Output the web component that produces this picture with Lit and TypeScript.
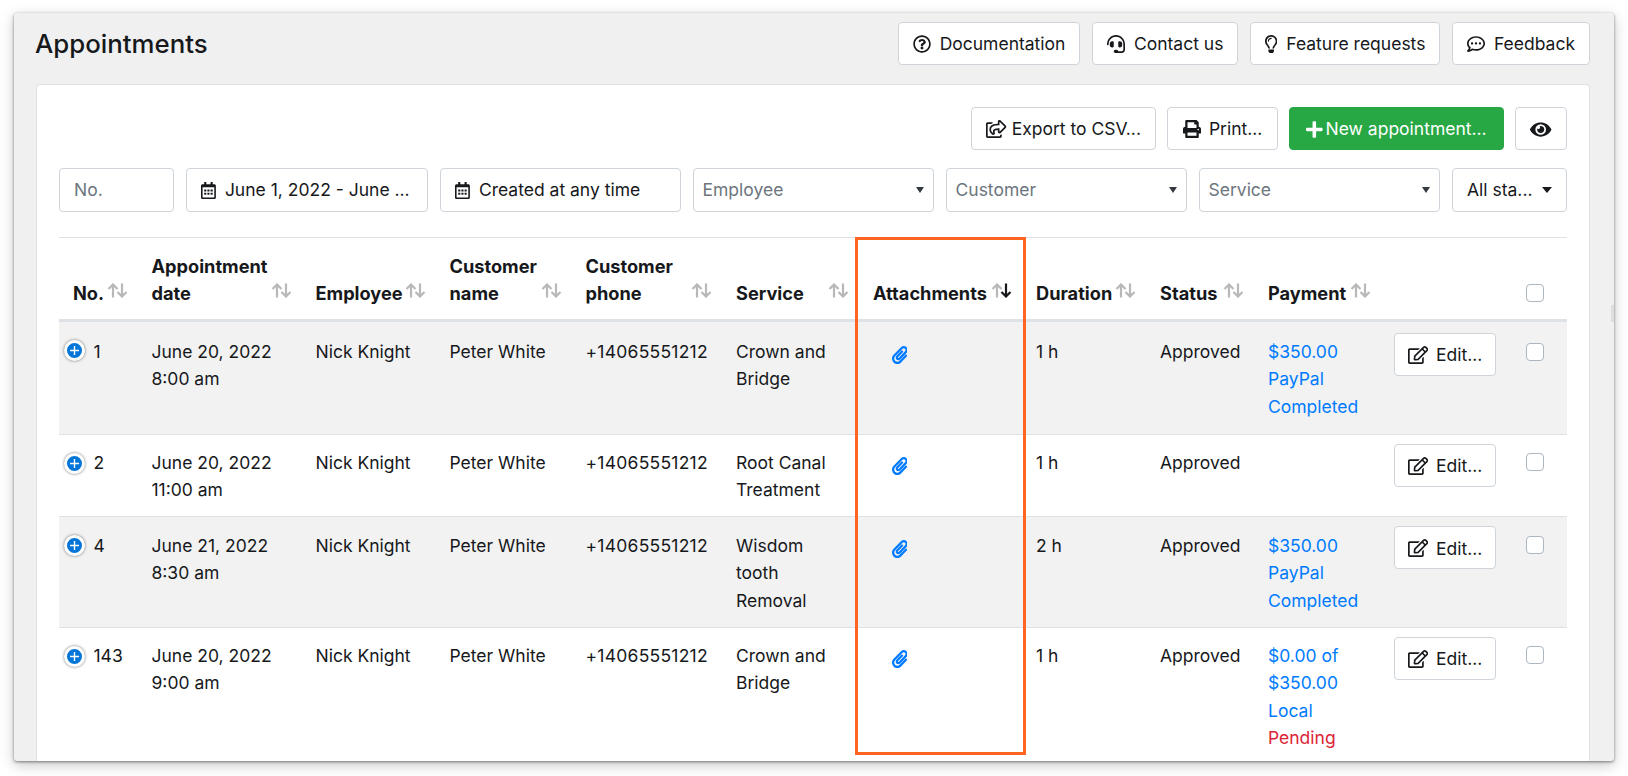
import { LitElement, html, css } from "lit";
import { customElement } from "lit/decorators.js";

// font-awesome style glyphs: [viewBox, path]
const ICONS: Record<string, [string, string]> = {
  question: ["0 0 512 512", "M256 8C119.043 8 8 119.083 8 256c0 136.997 111.043 248 248 248s248-111.003 248-248C504 119.083 392.957 8 256 8zm0 448c-110.532 0-200-89.431-200-200 0-110.495 89.472-200 200-200 110.491 0 200 89.471 200 200 0 110.53-89.431 200-200 200zm107.244-255.2c0 67.052-72.421 68.084-72.421 92.863V300c0 6.627-5.373 12-12 12h-45.647c-6.627 0-12-5.373-12-12v-8.659c0-35.745 27.1-50.034 47.579-61.516 17.561-9.845 28.324-16.541 28.324-29.579 0-17.246-21.999-28.693-39.784-28.693-23.189 0-33.894 10.977-48.942 29.969-4.057 5.12-11.46 6.071-16.666 2.124l-27.824-21.098c-5.107-3.872-6.251-11.066-2.644-16.363C184.846 131.491 214.94 112 261.794 112c49.071 0 101.45 38.304 101.45 88.8zM298 368c0 23.159-18.841 42-42 42s-42-18.841-42-42 18.841-42 42-42 42 18.841 42 42z"],
  headset: ["0 0 512 512", "M192 208c0-17.67-14.33-32-32-32h-16c-35.35 0-64 28.65-64 64v48c0 35.35 28.65 64 64 64h16c17.67 0 32-14.33 32-32V208zm176 144c35.35 0 64-28.65 64-64v-48c0-35.35-28.65-64-64-64h-16c-17.67 0-32 14.33-32 32v112c0 17.67 14.33 32 32 32h16zM256 0C113.18 0 4.58 118.83 0 256v16c0 8.84 7.16 16 16 16h16c8.84 0 16-7.16 16-16v-16c0-114.69 93.31-208 208-208s208 93.31 208 208h-.12c.08 2.43.12 165.72.12 165.72 0 23.35-18.93 42.28-42.28 42.28H320c0-26.51-21.49-48-48-48h-32c-26.51 0-48 21.49-48 48s21.49 48 48 48h181.72c49.86 0 90.28-40.42 90.28-90.28V256C507.42 118.83 398.82 0 256 0z"],
  bulb: ["0 0 352 512", "M176 80c-52.94 0-96 43.06-96 96 0 8.84 7.16 16 16 16s16-7.16 16-16c0-35.3 28.72-64 64-64 8.84 0 16-7.16 16-16s-7.16-16-16-16zM96.06 459.17c0 3.15.93 6.22 2.68 8.84l24.51 36.84c2.97 4.46 7.97 7.14 13.32 7.14h78.85c5.36 0 10.36-2.68 13.32-7.14l24.51-36.84c1.74-2.62 2.67-5.7 2.68-8.84l.05-43.18H96.02l.04 43.18zM176 0C73.72 0 0 82.97 0 176c0 44.37 16.45 84.85 43.56 115.78 16.64 18.99 42.74 58.8 52.42 92.16v.06h48v-.12c-.01-4.77-.72-9.51-2.15-14.07-5.59-17.81-22.82-64.77-62.17-109.67-20.54-23.43-31.52-53.15-31.61-84.14-.2-73.64 59.67-128 127.95-128 70.58 0 128 57.42 128 128 0 30.97-11.24 60.85-31.65 84.14-39.11 44.61-56.42 91.47-62.1 109.46a47.507 47.507 0 0 0-2.22 14.3v.1h48v-.05c9.68-33.37 35.78-73.18 52.42-92.16C335.55 260.85 352 220.37 352 176 352 78.8 273.2 0 176 0z"],
  comment: ["0 0 512 512", "M144 208c-17.7 0-32 14.3-32 32s14.3 32 32 32 32-14.3 32-32-14.3-32-32-32zm112 0c-17.7 0-32 14.3-32 32s14.3 32 32 32 32-14.3 32-32-14.3-32-32-32zm112 0c-17.7 0-32 14.3-32 32s14.3 32 32 32 32-14.3 32-32-14.3-32-32-32zM256 32C114.6 32 0 125.1 0 240c0 47.6 19.9 91.2 52.9 126.3C38 405.7 7 439.1 6.5 439.5c-6.6 7-8.4 17.2-4.6 26S14.4 480 24 480c61.5 0 110-25.7 139.1-46.3C192 442.8 223.2 448 256 448c141.4 0 256-93.1 256-208S397.4 32 256 32zm0 368c-26.7 0-53.1-4.1-78.4-12.1l-22.7-7.2-19.5 13.8c-14.3 10.1-33.9 21.4-57.5 29 7.3-12.1 14.4-25.7 19.9-40.2l10.6-28.1-20.6-21.8C69.7 314.1 48 282.2 48 240c0-88.2 93.3-160 208-160s208 71.8 208 160-93.3 160-208 160z"],
  share: ["0 0 576 512", "M561.938 158.06L417.94 14.092C387.926-15.922 336 5.097 336 48.032v57.198c-42.45 1.88-84.03 6.55-120.76 17.99-35.17 10.95-63.07 27.58-82.91 49.42C108.22 199.2 96 232.6 96 271.94c0 61.697 33.178 112.455 84.87 144.76 37.546 23.508 85.248-12.651 71.02-55.74-15.515-47.119-17.156-70.923 84.11-78.76V336c0 42.993 51.968 63.913 81.94 33.94l143.998-144c18.75-18.74 18.75-49.14 0-67.88zM384 336V232.16C255.309 234.082 166.492 255.35 206.31 376 176.79 357.55 144 324.08 144 271.94c0-109.334 129.14-118.947 240-119.85V48l144 144-144 144zm24.74 84.493a82.658 82.658 0 0 0 20.974-9.303c7.976-4.952 18.286.826 18.286 10.214V464c0 26.51-21.49 48-48 48H48c-26.51 0-48-21.49-48-48V112c0-26.51 21.49-48 48-48h132c6.627 0 12 5.373 12 12v4.486c0 4.917-2.987 9.369-7.569 11.152-13.702 5.331-26.396 11.537-38.05 18.585a12.138 12.138 0 0 1-6.28 1.777H54a6 6 0 0 0-6 6v340a6 6 0 0 0 6 6h340a6 6 0 0 0 6-6v-25.966c0-5.37 3.579-10.059 8.74-11.541z"],
  print: ["0 0 512 512", "M448 192V77.25c0-8.49-3.37-16.62-9.37-22.63L393.37 9.37c-6-6-14.14-9.37-22.63-9.37H96C78.33 0 64 14.33 64 32v160c-35.35 0-64 28.65-64 64v112c0 8.84 7.16 16 16 16h48v96c0 17.67 14.33 32 32 32h320c17.67 0 32-14.33 32-32v-96h48c8.84 0 16-7.16 16-16V256c0-35.35-28.65-64-64-64zm-64 256H128v-96h256v96zm0-224H128V64h192v48c0 8.84 7.16 16 16 16h48v96zm48 72c-13.25 0-24-10.75-24-24 0-13.26 10.75-24 24-24s24 10.74 24 24c0 13.25-10.75 24-24 24z"],
  plus: ["0 0 448 512", "M416 208H272V64c0-17.67-14.33-32-32-32h-32c-17.67 0-32 14.33-32 32v144H32c-17.67 0-32 14.33-32 32v32c0 17.67 14.33 32 32 32h144v144c0 17.67 14.33 32 32 32h32c17.67 0 32-14.33 32-32V304h144c17.67 0 32-14.33 32-32v-32c0-17.67-14.33-32-32-32z"],
  eye: ["0 0 576 512", "M572.52 241.4C518.29 135.59 410.93 64 288 64S57.68 135.64 3.48 241.41a32.35 32.35 0 0 0 0 29.19C57.71 376.41 165.07 448 288 448s230.32-71.64 284.52-177.41a32.35 32.35 0 0 0 0-29.19zM288 400a144 144 0 1 1 144-144 143.93 143.93 0 0 1-144 144zm0-240a95.31 95.31 0 0 0-25.31 3.79 47.85 47.85 0 0 1-66.9 66.9A95.78 95.78 0 1 0 288 160z"],
  calendar: ["0 0 448 512", "M148 288h-40c-6.6 0-12-5.4-12-12v-40c0-6.6 5.4-12 12-12h40c6.6 0 12 5.4 12 12v40c0 6.6-5.4 12-12 12zm108-12v-40c0-6.6-5.4-12-12-12h-40c-6.6 0-12 5.4-12 12v40c0 6.6 5.4 12 12 12h40c6.6 0 12-5.4 12-12zm96 0v-40c0-6.6-5.4-12-12-12h-40c-6.6 0-12 5.4-12 12v40c0 6.6 5.4 12 12 12h40c6.6 0 12-5.4 12-12zm-96 96v-40c0-6.6-5.4-12-12-12h-40c-6.6 0-12 5.4-12 12v40c0 6.6 5.4 12 12 12h40c6.6 0 12-5.4 12-12zm-96 0v-40c0-6.6-5.4-12-12-12h-40c-6.6 0-12 5.4-12 12v40c0 6.6 5.4 12 12 12h40c6.6 0 12-5.4 12-12zm192 0v-40c0-6.6-5.4-12-12-12h-40c-6.6 0-12 5.4-12 12v40c0 6.6 5.4 12 12 12h40c6.6 0 12-5.4 12-12zm96-260v352c0 26.5-21.5 48-48 48H48c-26.5 0-48-21.5-48-48V112c0-26.5 21.5-48 48-48h48V12c0-6.6 5.4-12 12-12h40c6.6 0 12 5.4 12 12v52h128V12c0-6.6 5.4-12 12-12h40c6.6 0 12 5.4 12 12v52h48c26.5 0 48 21.5 48 48zm-48 346V160H48v298c0 3.3 2.7 6 6 6h340c3.3 0 6-2.7 6-6z"],
  edit: ["0 0 576 512", "M402.3 344.9l32-32c5-5 13.7-1.5 13.7 5.7V464c0 26.5-21.5 48-48 48H48c-26.5 0-48-21.5-48-48V112c0-26.5 21.5-48 48-48h273.5c7.1 0 10.7 8.6 5.7 13.7l-32 32c-1.5 1.5-3.5 2.3-5.7 2.3H48v352h352V350.5c0-2.1.8-4.1 2.3-5.6zm156.6-201.8L296.3 405.7l-90.4 10c-26.2 2.9-48.5-19.2-45.6-45.6l10-90.4L432.9 17.1c22.9-22.9 59.9-22.9 82.7 0l43.2 43.2c22.9 22.9 22.9 60 .1 82.8zM460.1 174L402 115.9 216.2 301.8l-7.3 65.3 65.3-7.3L460.1 174zm64.8-79.7l-43.2-43.2c-4.1-4.1-10.8-4.1-14.8 0L436 82l58.1 58.1 30.9-30.9c4-4.2 4-10.8-.1-14.9z"],
  clip: ["0 0 448 512", "M43.246 466.142c-58.43-60.289-57.341-157.511 1.386-217.581L254.392 34c44.316-45.332 116.351-45.336 160.671 0 43.89 44.894 43.943 117.329 0 162.276L232.214 383.128c-29.855 30.537-78.633 30.111-107.982-.998-28.275-29.97-27.368-77.473 1.452-106.953l143.743-146.835c6.182-6.314 16.312-6.422 22.626-.241l22.861 22.379c6.315 6.182 6.422 16.312.241 22.626L171.427 319.927c-4.932 5.045-5.236 13.428-.648 18.292 4.372 4.634 11.245 4.711 15.688.165l182.849-186.851c19.613-20.062 19.613-52.725-.011-72.798-19.189-19.627-49.957-19.637-69.154 0L90.39 293.295c-34.763 35.56-35.299 93.12-1.191 128.313 34.01 35.093 88.985 35.137 123.058.286l172.06-175.999c6.177-6.319 16.307-6.433 22.626-.256l22.877 22.364c6.319 6.177 6.434 16.307.256 22.626l-172.06 175.998c-59.576 60.938-155.943 60.216-214.77-.485z"],
};

const icon = (name: string) => {
  const [vb, d] = ICONS[name];
  return html`<svg class="icon ${name}" viewBox=${vb} fill="currentColor"><path d=${d}></path></svg>`;
};

const sortArrows = (active = false) => html`<svg class="sort" viewBox="0 0 21 15" fill="none" stroke-width="2.2">
  <path d="M6 14.5V1.5M1.5 6L6 1.5 10.5 6" stroke="#b8b8b8"></path>
  <path d="M15 .5v13M10.5 9l4.5 4.5L19.5 9" stroke=${active ? "#16181b" : "#b8b8b8"}></path>
</svg>`;

const COLUMNS = [
  { label: "No." },
  { label: "Appointment date" },
  { label: "Employee" },
  { label: "Customer name" },
  { label: "Customer phone" },
  { label: "Service" },
  { label: "Attachments", active: true },
  { label: "Duration" },
  { label: "Status" },
  { label: "Payment" },
];

const ROWS = [
  { no: "1", date: "June 20, 2022", time: "8:00 am", service: ["Crown and", "Bridge"], dur: "1 h", pay: ["$350.00", "PayPal", "Completed"], pending: false },
  { no: "2", date: "June 20, 2022", time: "11:00 am", service: ["Root Canal", "Treatment"], dur: "1 h", pay: [], pending: false },
  { no: "4", date: "June 21, 2022", time: "8:30 am", service: ["Wisdom", "tooth", "Removal"], dur: "2 h", pay: ["$350.00", "PayPal", "Completed"], pending: false },
  { no: "143", date: "June 20, 2022", time: "9:00 am", service: ["Crown and", "Bridge"], dur: "1 h", pay: ["$0.00 of", "$350.00", "Local"], pending: true },
];

@customElement("app-root")
export class AppRoot extends LitElement {
  static styles = css`
    :host {
      display: block;
      height: 776px;
      box-sizing: border-box;
      padding: 13px 14px 15px;
      background: #fff;
      overflow: hidden;
      font-family: Inter, "Liberation Sans", sans-serif;
      font-size: 17.5px;
      line-height: 27.4px;
      color: #16181b;
    }
    * {
      box-sizing: border-box;
    }
    .panel {
      position: relative;
      height: 748px;
      background: #f0f0f0;
      padding: 9px 24px 0 22px;
      overflow: hidden;
      border-radius: 3px;
      box-shadow: 0 1px 3px rgba(0, 0, 0, 0.45), 0 4px 14px rgba(0, 0, 0, 0.22);
    }
    .grip {
      position: absolute;
      right: 0;
      top: 292px;
      width: 3px;
      height: 17px;
      background: #dedede;
    }
    .head {
      display: flex;
      justify-content: space-between;
      align-items: center;
      margin-bottom: 19px;
    }
    h1 {
      margin: 0 0 0 -1px;
      padding-top: 1px;
      font-size: 25.8px;
      font-weight: 500;
      line-height: 42px;
    }
    .actions,
    .tools {
      display: flex;
      gap: 11.5px;
    }
    .btn {
      display: inline-flex;
      align-items: center;
      justify-content: center;
      height: 43px;
      padding: 1px 14px 0;
      background: #fff;
      border: 1px solid #ced4da;
      border-radius: 4px;
      white-space: nowrap;
    }
    .icon {
      display: block;
      flex: none;
      height: 17px;
    }
    .actions .icon {
      height: 18px;
      margin-right: 9px;
    }
    .tools .icon {
      height: 18px;
      margin-right: 8px;
    }
    .tools {
      justify-content: flex-end;
      gap: 11px;
      margin-bottom: 18px;
    }
    .tools .btn {
      padding: 1px 14.5px 0;
    }
    .tools .icon.share {
      margin-right: 5px;
    }
    .tools .btn.new {
      background: #28a745;
      border-color: #28a745;
      color: #fff;
      padding: 1px 16px 0;
    }
    .tools .btn.new .icon {
      height: 19px;
      margin-right: 3px;
    }
    .tools .btn.eye .icon {
      height: 19px;
      margin: 0;
    }
    .card {
      background: #fff;
      border: 1px solid #dee2e6;
      border-bottom: 0;
      border-radius: 4px 4px 0 0;
      padding: 22px 22px 0;
      height: 700px;
    }
    .filters {
      display: grid;
      grid-template-columns: 115px 242px 241px 241px 241px 241px 115px;
      gap: 12px;
      margin-bottom: 24.5px;
    }
    .field {
      display: flex;
      align-items: center;
      height: 44px;
      padding: 0 9.5px 0 8.5px;
      background: #fff;
      border: 1px solid #ced4da;
      border-radius: 4px;
      white-space: nowrap;
    }
    .field .icon {
      margin-right: 9px;
    }
    .ph {
      color: #6c757d;
    }
    .field.no,
    .field.date {
      padding-left: 14px;
    }
    .field.select {
      justify-content: space-between;
    }
    .field.status {
      justify-content: space-between;
      padding: 0 14px;
    }
    .caret {
      flex: none;
      border: 4.5px solid transparent;
      border-top: 6px solid #343a40;
      border-bottom: 0;
    }
    .field.status .caret {
      border-width: 6px 5.5px 0;
      border-top-color: #16181b;
    }
    .table-wrap {
      position: relative;
    }
    .mark {
      position: absolute;
      left: 796px;
      top: 0.5px;
      width: 171px;
      height: 518px;
      border: 3px solid #ff6420;
      pointer-events: none;
    }
    table {
      width: 1508px;
      table-layout: fixed;
      border-collapse: separate;
      border-spacing: 0;
    }
    col.c0 { width: 78px; }
    col.c1 { width: 164px; }
    col.c2 { width: 134px; }
    col.c3 { width: 136px; }
    col.c4 { width: 150.5px; }
    col.c5 { width: 137px; }
    col.c6 { width: 163px; }
    col.c7 { width: 124px; }
    col.c8 { width: 108px; }
    col.c9 { width: 126.5px; }
    col.c10 { width: 131.5px; }
    col.c11 { width: 55.5px; }
    th {
      position: relative;
      text-align: left;
      vertical-align: bottom;
      font-size: 18.2px;
      font-weight: 700;
      padding: 15px 14.5px 12px;
      border-top: 1px solid #dee2e6;
      border-bottom: 3px solid #dee2e6;
    }
    th:first-child {
      padding-left: 14px;
    }
    .sort {
      position: absolute;
      right: 9.5px;
      bottom: 21.5px;
      width: 21px;
      height: 15px;
    }
    td {
      vertical-align: top;
      padding: 14.5px 14.5px 12.5px;
      border-bottom: 1px solid #dee2e6;
    }
    tr.odd td {
      background: #f2f2f2;
    }
    tbody tr:first-child td {
      padding-top: 15.5px;
      padding-bottom: 13.5px;
    }
    td.no {
      position: relative;
      padding-left: 34.5px;
    }
    .toggle {
      position: absolute;
      left: 5px;
      top: 18px;
      width: 21px;
      height: 21px;
      border-radius: 50%;
      background: #0275d8;
      border: 3px solid #fff;
      box-shadow: 0 0 3px rgba(0, 0, 0, 0.55);
      color: #fff;
      display: grid;
      place-items: center;
    }
    tbody tr:first-child .toggle {
      top: 17.5px;
    }
    .toggle svg {
      display: block;
      width: 9px;
      height: 9px;
    }
    td.clip {
      padding-left: 33px;
      color: #007bff;
    }
    td.clip .icon {
      height: 18px;
      margin-top: 8px;
    }
    td.phone {
      letter-spacing: 0.25px;
    }
    td.pay {
      color: #007bff;
      padding-right: 0;
    }
    .pending {
      color: #dc2436;
    }
    tbody td.act {
      padding: 9px 0 0 14px;
    }
    tbody tr:first-child td.act {
      padding: 10.5px 0 0 14px;
    }
    td.act .btn {
      width: 102px;
      padding: 1px 0 0;
    }
    td.act .icon {
      height: 18px;
      margin-right: 8px;
    }
    .check {
      display: block;
      width: 18px;
      height: 18px;
      background: #fff;
      border: 1.5px solid #adb5bd;
      border-radius: 4px;
      margin-top: 4px;
    }
    tbody tr:first-child .check {
      margin-top: 5.5px;
    }
    th .check {
      margin: 0 0 5px;
    }
    .line {
      display: block;
    }
  `;

  renderRow(r: (typeof ROWS)[number], i: number) {
    return html`<tr class=${i % 2 === 0 ? "odd" : ""}>
      <td class="no">
        <span class="toggle"><svg viewBox="0 0 9 9" stroke="#fff" stroke-width="1.4"><path d="M4.5 0v9M0 4.5h9"></path></svg></span>
        ${r.no}
      </td>
      <td><span class="line">${r.date}</span><span class="line">${r.time}</span></td>
      <td>Nick Knight</td>
      <td>Peter White</td>
      <td class="phone">+14065551212</td>
      <td>${r.service.map((s) => html`<span class="line">${s}</span>`)}</td>
      <td class="clip">${icon("clip")}</td>
      <td>${r.dur}</td>
      <td>Approved</td>
      <td class="pay">
        ${r.pay.map((p) => html`<span class="line">${p}</span>`)}
        ${r.pending ? html`<span class="line pending">Pending</span>` : ""}
      </td>
      <td class="act"><span class="btn">${icon("edit")}Edit...</span></td>
      <td><span class="check"></span></td>
    </tr>`;
  }

  render() {
    return html`<div class="panel">
      <div class="grip"></div>
      <div class="head">
        <h1>Appointments</h1>
        <div class="actions">
          <span class="btn">${icon("question")}Documentation</span>
          <span class="btn">${icon("headset")}Contact us</span>
          <span class="btn">${icon("bulb")}Feature requests</span>
          <span class="btn">${icon("comment")}Feedback</span>
        </div>
      </div>
      <div class="card">
        <div class="tools">
          <span class="btn">${icon("share")}Export to CSV...</span>
          <span class="btn">${icon("print")}Print...</span>
          <span class="btn new">${icon("plus")}New appointment...</span>
          <span class="btn eye">${icon("eye")}</span>
        </div>
        <div class="filters">
          <div class="field no ph">No.</div>
          <div class="field date">${icon("calendar")}June 1, 2022 - June ...</div>
          <div class="field date">${icon("calendar")}Created at any time</div>
          <div class="field select"><span class="ph">Employee</span><span class="caret"></span></div>
          <div class="field select"><span class="ph">Customer</span><span class="caret"></span></div>
          <div class="field select"><span class="ph">Service</span><span class="caret"></span></div>
          <div class="field status">All sta...<span class="caret"></span></div>
        </div>
        <div class="table-wrap">
          <table>
            <colgroup>
              ${Array.from({ length: 12 }, (_, i) => html`<col class="c${i}" />`)}
            </colgroup>
            <thead>
              <tr>
                ${COLUMNS.map((c) => html`<th>${c.label}${sortArrows(c.active)}</th>`)}
                <th></th>
                <th><span class="check"></span></th>
              </tr>
            </thead>
            <tbody>
              ${ROWS.map((r, i) => this.renderRow(r, i))}
            </tbody>
          </table>
          <div class="mark"></div>
        </div>
      </div>
    </div>`;
  }
}
